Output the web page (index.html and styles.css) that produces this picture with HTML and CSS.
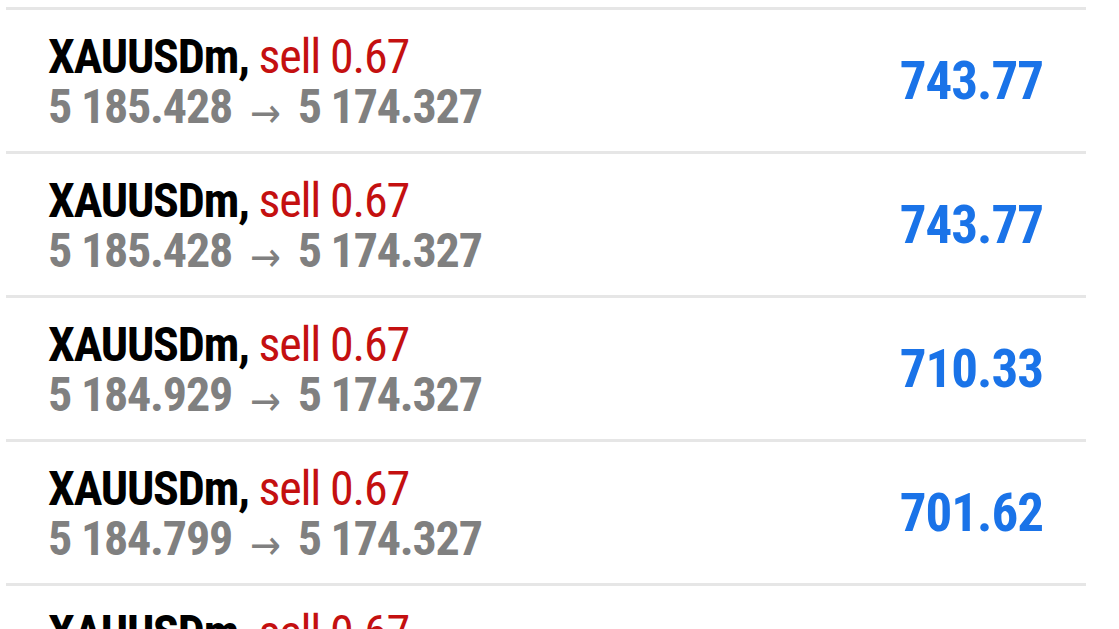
FILE: index.html
```html
<!DOCTYPE html>
<html>
<head>
<meta charset="utf-8">
<link rel="stylesheet" href="styles.css">
</head>
<body>
<div class="list">
  <div class="row">
    <div class="info">
      <div class="title"><span class="sym">XAUUSDm,</span> <span class="side">sell 0.67</span></div>
      <div class="prices">5 185.428 <span class="arrow">→</span> 5 174.327</div>
    </div>
    <div class="profit">743.77</div>
  </div>
  <div class="row">
    <div class="info">
      <div class="title"><span class="sym">XAUUSDm,</span> <span class="side">sell 0.67</span></div>
      <div class="prices">5 185.428 <span class="arrow">→</span> 5 174.327</div>
    </div>
    <div class="profit">743.77</div>
  </div>
  <div class="row">
    <div class="info">
      <div class="title"><span class="sym">XAUUSDm,</span> <span class="side">sell 0.67</span></div>
      <div class="prices">5 184.929 <span class="arrow">→</span> 5 174.327</div>
    </div>
    <div class="profit">710.33</div>
  </div>
  <div class="row">
    <div class="info">
      <div class="title"><span class="sym">XAUUSDm,</span> <span class="side">sell 0.67</span></div>
      <div class="prices">5 184.799 <span class="arrow">→</span> 5 174.327</div>
    </div>
    <div class="profit">701.62</div>
  </div>
  <div class="row">
    <div class="info">
      <div class="title"><span class="sym">XAUUSDm,</span> <span class="side">sell 0.67</span></div>
      <div class="prices">5 184.799 <span class="arrow">→</span> 5 174.327</div>
    </div>
    <div class="profit">701.62</div>
  </div>
</div>
</body>
</html>
```
FILE: styles.css
```css
html, body {
  margin: 0;
  padding: 0;
  background: #ffffff;
  overflow: hidden;
}
body {
  font-family: "Roboto Condensed", "Liberation Sans Narrow", "DejaVu Sans Condensed", Roboto, sans-serif;
}
.list {
  padding: 7px 33px 0 6px;
}
.row {
  display: flex;
  align-items: center;
  justify-content: space-between;
  border-top: 3px solid #e6e6e6;
  height: 141px;
  padding: 0 43px 0 42px;
}
.info {
  display: flex;
  flex-direction: column;
  padding-top: 2px;
}
.title, .prices {
  font-size: 48px;
  line-height: 50px;
  letter-spacing: -1.2px;
  white-space: nowrap;
}
.sym {
  font-weight: 700;
  color: #000000;
}
.side {
  color: #c41010;
}
.prices {
  font-weight: 700;
  color: #808080;
}
.arrow {
  font-weight: 400;
  font-size: 41px;
  letter-spacing: 0;
  margin: 0 7px 0 8px;
  vertical-align: -4px;
  line-height: 0;
}
.profit {
  font-size: 53px;
  font-weight: 700;
  letter-spacing: -1px;
  color: #1a73e8;
}
```
